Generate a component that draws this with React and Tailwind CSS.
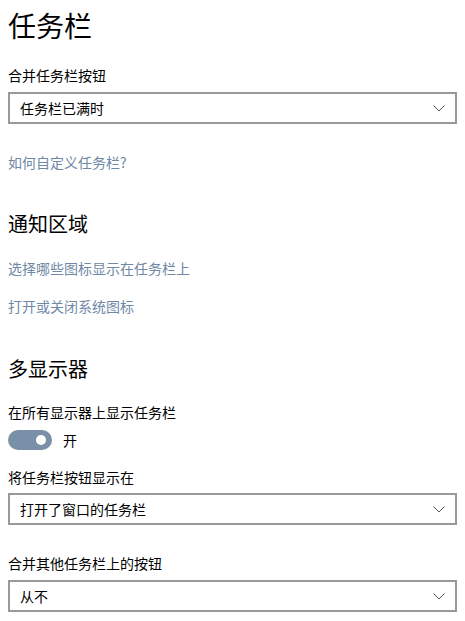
const font = { fontFamily: '"Microsoft YaHei", "Noto Sans CJK SC", sans-serif' };

function Chevron() {
  return (
    <svg width="12" height="7" viewBox="0 0 12 7" fill="none">
      <polyline points="0.5,0.5 6,6 11.5,0.5" stroke="#555" strokeWidth="1" />
    </svg>
  );
}

function Dropdown({ value, className = '' }) {
  return (
    <div className={`mx-2 h-[32px] border-2 border-[#999999] flex items-center justify-between pl-[10px] pr-[10px] bg-white ${className}`}>
      <span className="text-[14px] leading-[20px] text-black">{value}</span>
      <Chevron />
    </div>
  );
}

function Label({ children, className = '' }) {
  return <div className={`px-2 text-[14px] leading-[20px] text-black ${className}`}>{children}</div>;
}

function Link({ children, className = '' }) {
  return <div className={`px-2 text-[14px] leading-[20px] text-[#6f88a6] ${className}`}>{children}</div>;
}

function Heading({ children, className = '' }) {
  return <div className={`px-2 text-[20px] leading-[28px] text-black ${className}`}>{children}</div>;
}

export default function App() {
  return (
    <div className="w-[465px] h-[621px] bg-white overflow-hidden pt-[7px]" style={font}>
      <div className="px-2 h-[36px] text-[28px] leading-[36px] text-black">任务栏</div>

      <Label className="mt-[22px]">合并任务栏按钮</Label>
      <Dropdown value="任务栏已满时" className="mt-[7px]" />
      <Link className="mt-[28px]">如何自定义任务栏?</Link>

      <Heading className="mt-[38px]">通知区域</Heading>
      <Link className="mt-[20px]">选择哪些图标显示在任务栏上</Link>
      <Link className="mt-[18px]">打开或关闭系统图标</Link>

      <Heading className="mt-[39px]">多显示器</Heading>
      <Label className="mt-[19px]">在所有显示器上显示任务栏</Label>
      <div className="mt-[8px] px-2 flex items-center gap-[11px] h-[20px]">
        <div className="w-[44px] h-[20px] rounded-full bg-[#7a90a8] flex items-center justify-end pr-[6px]">
          <div className="w-[10px] h-[10px] rounded-full bg-white" />
        </div>
        <span className="text-[14px] leading-[20px] text-black">开</span>
      </div>
      <Label className="mt-[17px]">将任务栏按钮显示在</Label>
      <Dropdown value="打开了窗口的任务栏" className="mt-[6px]" />
      <Label className="mt-[28px]">合并其他任务栏上的按钮</Label>
      <Dropdown value="从不" className="mt-[7px]" />
    </div>
  );
}
